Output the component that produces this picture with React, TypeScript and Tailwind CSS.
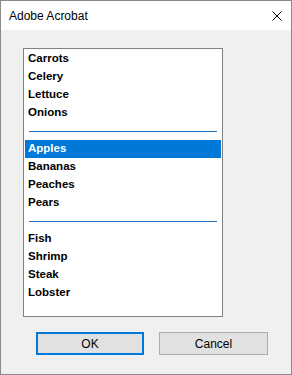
const groups = [
  ["Carrots", "Celery", "Lettuce", "Onions"],
  ["Apples", "Bananas", "Peaches", "Pears"],
  ["Fish", "Shrimp", "Steak", "Lobster"],
]

const selected = "Apples"

const font = { fontFamily: '"Liberation Sans", Arial, sans-serif' }

export default function App() {
  return (
    <div
      className="w-[292px] h-[375px] border border-[#8a8a8a] bg-[#f0f0f0] flex flex-col text-black"
      style={font}
    >
      {/* Title bar */}
      <div className="h-[29px] bg-white flex items-center justify-between pl-[8px] pr-[9px]">
        <span className="text-[12px]">Adobe Acrobat</span>
        <svg width="10" height="10" viewBox="0 0 10 10" className="mr-[0px]">
          <path d="M0.5 0.5 L9.5 9.5 M9.5 0.5 L0.5 9.5" stroke="#000" strokeWidth="1" />
        </svg>
      </div>

      {/* Body */}
      <div className="flex-1 flex flex-col pt-[18px] pl-[22px]">
        <div className="w-[200px] h-[269px] bg-white border border-[#828282] px-px pt-px">
          {groups.map((group, gi) => (
            <div key={gi}>
              {gi > 0 && (
                <div className="h-[18px] flex items-center px-1">
                  <div className="h-px w-full bg-[#1e6fc0]" />
                </div>
              )}
              {group.map((item) => (
                <div
                  key={item}
                  className={
                    item === selected
                      ? "h-[18px] flex items-center pl-[3px] text-[11.5px] font-bold bg-[#0078d7] text-white"
                      : "h-[18px] flex items-center pl-[3px] text-[11.5px] font-bold"
                  }
                >
                  {item}
                </div>
              ))}
            </div>
          ))}
        </div>

        {/* Buttons */}
        <div className="flex gap-[15px] mt-[15px] pl-[13px]">
          <button className="w-[108px] h-[23px] bg-[#e1e1e1] border-2 border-[#0078d7] text-[12px] flex items-center justify-center">
            OK
          </button>
          <button className="w-[109px] h-[23px] bg-[#e1e1e1] border border-[#adadad] text-[12px] flex items-center justify-center">
            Cancel
          </button>
        </div>
      </div>
    </div>
  )
}
